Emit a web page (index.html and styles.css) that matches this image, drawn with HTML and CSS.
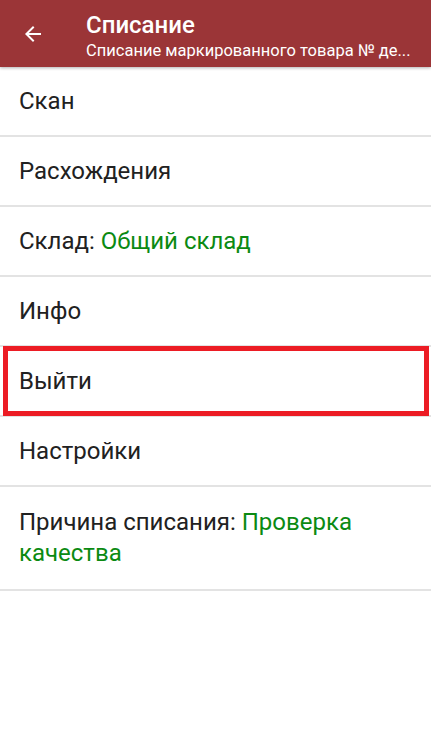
FILE: index.html
```html
<!DOCTYPE html>
<html lang="ru">
<head>
  <meta charset="UTF-8">
  <meta name="viewport" content="width=device-width, initial-scale=1.0">
  <title>Списание</title>
  <link rel="stylesheet" href="styles.css">
</head>
<body>
  <header class="toolbar">
    <button class="back" aria-label="Назад">
      <svg width="16" height="16" viewBox="0 0 16 16">
        <path d="M16 7H3.83l5.59-5.59L8 0 0 8l8 8 1.41-1.41L3.83 9H16z" fill="#fff"/>
      </svg>
    </button>
    <div class="titles">
      <div class="title">Списание</div>
      <div class="subtitle">Списание маркированного товара № де...</div>
    </div>
  </header>

  <ul class="menu">
    <li class="item">Скан</li>
    <li class="item">Расхождения</li>
    <li class="item">Склад: <span class="value">Общий склад</span></li>
    <li class="item">Инфо</li>
    <li class="item highlighted">Выйти</li>
    <li class="item">Настройки</li>
    <li class="item multiline">Причина списания: <span class="value">Проверка качества</span></li>
  </ul>
</body>
</html>
```

FILE: styles.css
```css
body {
  margin: 0;
  font-family: Roboto, 'Noto Sans', sans-serif;
  background-color: #FFFFFF;
  color: #212121;
}
.toolbar {
  height: 67px;
  background-color: #9B3537; /* dark red */
  display: flex;
  align-items: center;
  box-shadow: 0 1px 3px rgba(0, 0, 0, 0.3);
  position: relative;
  z-index: 1;
}
.back {
  width: 66px;
  height: 67px;
  border: none;
  background: none;
  padding: 0 0 0 25px;
  display: flex;
  align-items: center;
  cursor: pointer;
}
.titles {
  margin-left: 20px;
  margin-top: 5px;
  color: #FFFFFF;
  min-width: 0;
}
.title {
  font-size: 24px;
  font-weight: 500;
  line-height: 28px;
}
.subtitle {
  font-size: 16.5px;
  line-height: 20px;
  margin-top: 2px;
  white-space: nowrap;
}
.menu {
  list-style: none;
  margin: 0;
  padding: 0;
}
.item {
  min-height: 70px;
  box-sizing: border-box;
  padding: 20px 19px;
  font-size: 24px;
  line-height: 28px;
  border-bottom: 2px solid #E3E3E3; /* light divider */
  position: relative;
}
.item.multiline {
  padding: 20px 60px 20px 19px;
  line-height: 31px;
}
.value {
  color: #0B8A12; /* green value */
}
/* red annotation frame */
.highlighted::after {
  content: '';
  position: absolute;
  left: 3px;
  right: 2px;
  top: -1px;
  bottom: -1px;
  border: 5px solid #EC1C24;
}
```
